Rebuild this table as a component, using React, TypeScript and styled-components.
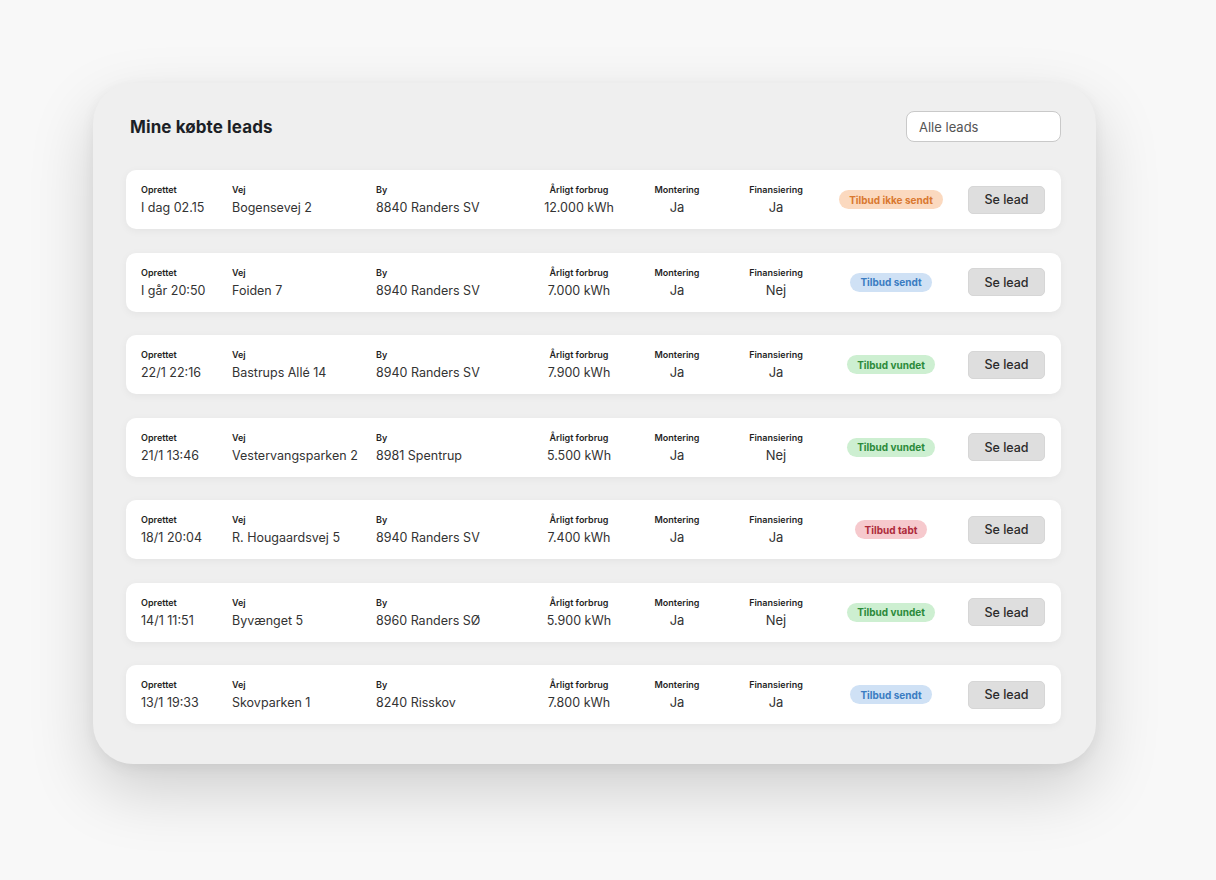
import React from 'react';
import styled, { createGlobalStyle } from 'styled-components';

const GlobalStyle = createGlobalStyle`
  html, body {
    margin: 0;
    padding: 0;
    background: #f8f8f8;
    font-family: Inter, "Noto Sans", "Liberation Sans", sans-serif;
    color: #222;
  }
`;

type Status = 'notSent' | 'sent' | 'won' | 'lost';

interface Lead {
  created: string;
  street: string;
  city: string;
  usage: string;
  mounting: string;
  financing: string;
  status: Status;
}

const leads: Lead[] = [
  { created: 'I dag 02.15', street: 'Bogensevej 2', city: '8840 Randers SV', usage: '12.000 kWh', mounting: 'Ja', financing: 'Ja', status: 'notSent' },
  { created: 'I går 20:50', street: 'Foiden 7', city: '8940 Randers SV', usage: '7.000 kWh', mounting: 'Ja', financing: 'Nej', status: 'sent' },
  { created: '22/1 22:16', street: 'Bastrups Allé 14', city: '8940 Randers SV', usage: '7.900 kWh', mounting: 'Ja', financing: 'Ja', status: 'won' },
  { created: '21/1 13:46', street: 'Vestervangsparken 2', city: '8981 Spentrup', usage: '5.500 kWh', mounting: 'Ja', financing: 'Nej', status: 'won' },
  { created: '18/1 20:04', street: 'R. Hougaardsvej 5', city: '8940 Randers SV', usage: '7.400 kWh', mounting: 'Ja', financing: 'Ja', status: 'lost' },
  { created: '14/1 11:51', street: 'Byvænget 5', city: '8960 Randers SØ', usage: '5.900 kWh', mounting: 'Ja', financing: 'Nej', status: 'won' },
  { created: '13/1 19:33', street: 'Skovparken 1', city: '8240 Risskov', usage: '7.800 kWh', mounting: 'Ja', financing: 'Ja', status: 'sent' },
];

const statusStyles: Record<Status, { label: string; bg: string; fg: string }> = {
  notSent: { label: 'Tilbud ikke sendt', bg: '#fbd9bf', fg: '#d9782f' },
  sent: { label: 'Tilbud sendt', bg: '#cfe1f5', fg: '#3a7cc2' },
  won: { label: 'Tilbud vundet', bg: '#cdefd1', fg: '#2b8a3a' },
  lost: { label: 'Tilbud tabt', bg: '#f6c9cd', fg: '#ad2a3a' },
};

const Page = styled.div`
  padding: 83px 0 0 93px;
  min-height: 880px;
  box-sizing: border-box;
`;

const Card = styled.div`
  width: 1003px;
  height: 681px;
  box-sizing: border-box;
  background: #efefef;
  border-radius: 40px;
  box-shadow: 0 26px 64px rgba(0, 0, 0, 0.17), 0 4px 14px rgba(0, 0, 0, 0.06);
  padding: 28px 35px 0 33px;
`;

const Header = styled.div`
  display: flex;
  align-items: center;
  justify-content: space-between;
  margin-bottom: 28px;
`;

const Title = styled.h1`
  margin: 0 0 0 4px;
  font-size: 17px;
  font-weight: 700;
  color: #1c1f26;
  letter-spacing: 0.1px;
`;

const Select = styled.div`
  width: 155px;
  height: 31px;
  box-sizing: border-box;
  background: #fff;
  border: 1px solid #c9c9c9;
  border-radius: 8px;
  padding: 0 12px;
  display: flex;
  align-items: center;
  font-size: 13px;
  color: #555;
`;

const List = styled.div`
  display: flex;
  flex-direction: column;
  gap: 23.5px;
`;

const Row = styled.div`
  height: 59px;
  box-sizing: border-box;
  background: #fff;
  border-radius: 10px;
  box-shadow: 0 2px 8px rgba(0, 0, 0, 0.05);
  padding: 0 16px 0 15px;
  display: grid;
  grid-template-columns: 91px 144px 153px 100px 96px 102px 128px 1fr;
  align-items: center;
`;

const Cell = styled.div<{ $center?: boolean }>`
  display: flex;
  flex-direction: column;
  gap: 3px;
  margin-top: 1px;
  align-items: ${({ $center }) => ($center ? 'center' : 'flex-start')};
`;

const Label = styled.span`
  font-size: 9px;
  font-weight: 600;
  color: #1f1f1f;
  line-height: 12px;
`;

const Value = styled.span<{ $big?: boolean }>`
  font-size: ${({ $big }) => ($big ? '13px' : '12.5px')};
  color: #333;
  line-height: 17px;
  white-space: nowrap;
`;

const Badge = styled.span<{ $bg: string; $fg: string }>`
  justify-self: center;
  height: 19px;
  padding: 0 10px;
  border-radius: 10px;
  background: ${({ $bg }) => $bg};
  color: ${({ $fg }) => $fg};
  font-size: 10px;
  font-weight: 700;
  display: inline-flex;
  align-items: center;
  white-space: nowrap;
`;

const Button = styled.button`
  justify-self: end;
  width: 77px;
  height: 28px;
  border: 1px solid #d6d6d6;
  border-radius: 5px;
  background: #dedede;
  font-family: inherit;
  font-size: 12.5px;
  font-weight: 500;
  color: #2b2b2b;
  cursor: pointer;
`;

const LeadRow: React.FC<{ lead: Lead }> = ({ lead }) => {
  const s = statusStyles[lead.status];
  return (
    <Row>
      <Cell>
        <Label>Oprettet</Label>
        <Value>{lead.created}</Value>
      </Cell>
      <Cell>
        <Label>Vej</Label>
        <Value>{lead.street}</Value>
      </Cell>
      <Cell>
        <Label>By</Label>
        <Value>{lead.city}</Value>
      </Cell>
      <Cell $center>
        <Label>Årligt forbrug</Label>
        <Value>{lead.usage}</Value>
      </Cell>
      <Cell $center>
        <Label>Montering</Label>
        <Value $big>{lead.mounting}</Value>
      </Cell>
      <Cell $center>
        <Label>Finansiering</Label>
        <Value $big>{lead.financing}</Value>
      </Cell>
      <Badge $bg={s.bg} $fg={s.fg}>{s.label}</Badge>
      <Button>Se lead</Button>
    </Row>
  );
};

export default function App() {
  return (
    <>
      <GlobalStyle />
      <Page>
        <Card>
          <Header>
            <Title>Mine købte leads</Title>
            <Select>Alle leads</Select>
          </Header>
          <List>
            {leads.map((lead) => (
              <LeadRow key={lead.created} lead={lead} />
            ))}
          </List>
        </Card>
      </Page>
    </>
  );
}
